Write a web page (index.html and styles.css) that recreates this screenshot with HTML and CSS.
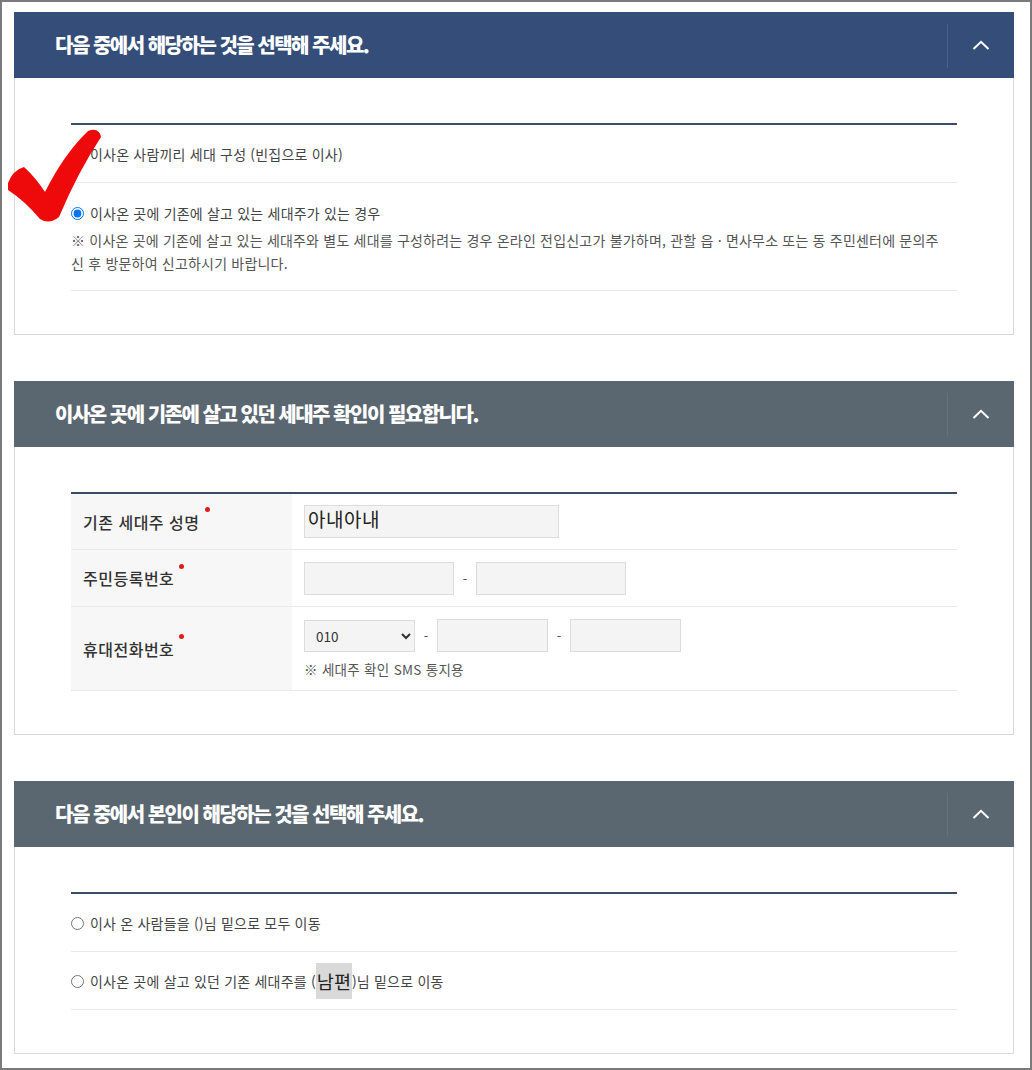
FILE: index.html
```html
<!DOCTYPE html>
<html lang="ko">
<head>
<meta charset="utf-8">
<title>전입신고</title>
<link rel="stylesheet" href="styles.css">
</head>
<body>
<div class="frame">
  <section class="panel">
    <div class="panel-head navy">
      <h2 class="panel-title">다음 중에서 해당하는 것을 선택해 주세요.</h2>
      <button class="toggle" type="button" aria-label="접기">
        <svg width="18" height="10" viewBox="0 0 18 10"><polyline points="1.5,9 9,1.8 16.5,9" fill="none" stroke="#fff" stroke-width="2"/></svg>
      </button>
    </div>
    <div class="panel-body">
      <ul class="opts">
        <li class="opt"><label class="opt-label"><input type="radio" name="q1" class="radio">이사온 사람끼리 세대 구성 (빈집으로 이사)</label></li>
        <li class="opt opt-tall">
          <label class="opt-label"><input type="radio" name="q1" class="radio" checked>이사온 곳에 기존에 살고 있는 세대주가 있는 경우</label>
          <p class="note">※ 이사온 곳에 기존에 살고 있는 세대주와 별도 세대를 구성하려는 경우 온라인 전입신고가 불가하며, 관할 읍 · 면사무소 또는 동 주민센터에 문의주<br>신 후 방문하여 신고하시기 바랍니다.</p>
        </li>
      </ul>
    </div>
  </section>

  <section class="panel">
    <div class="panel-head slate">
      <h2 class="panel-title">이사온 곳에 기존에 살고 있던 세대주 확인이 필요합니다.</h2>
      <button class="toggle" type="button" aria-label="접기">
        <svg width="18" height="10" viewBox="0 0 18 10"><polyline points="1.5,9 9,1.8 16.5,9" fill="none" stroke="#fff" stroke-width="2"/></svg>
      </button>
    </div>
    <div class="panel-body">
      <div class="form">
        <div class="frow r1">
          <div class="flabel">기존 세대주 성명<span class="req"></span></div>
          <div class="fcell"><input class="field w255 big" type="text" value="아내아내"></div>
        </div>
        <div class="frow r2">
          <div class="flabel">주민등록번호<span class="req"></span></div>
          <div class="fcell"><input class="field w150" type="text"><span class="dash">-</span><input class="field w150" type="password"></div>
        </div>
        <div class="frow r3">
          <div class="flabel">휴대전화번호<span class="req"></span></div>
          <div class="fcell col">
            <div class="line">
              <select class="field sel"><option>010</option><option>011</option><option>016</option></select><span class="dash">-</span><input class="field w111" type="text"><span class="dash">-</span><input class="field w111" type="text">
            </div>
            <p class="hint">※ 세대주 확인 SMS 통지용</p>
          </div>
        </div>
      </div>
    </div>
  </section>

  <section class="panel">
    <div class="panel-head slate">
      <h2 class="panel-title">다음 중에서 본인이 해당하는 것을 선택해 주세요.</h2>
      <button class="toggle" type="button" aria-label="접기">
        <svg width="18" height="10" viewBox="0 0 18 10"><polyline points="1.5,9 9,1.8 16.5,9" fill="none" stroke="#fff" stroke-width="2"/></svg>
      </button>
    </div>
    <div class="panel-body">
      <ul class="opts">
        <li class="opt"><label class="opt-label"><input type="radio" name="q3" class="radio">이사 온 사람들을 ()님 밑으로 모두 이동</label></li>
        <li class="opt"><label class="opt-label"><input type="radio" name="q3" class="radio">이사온 곳에 살고 있던 기존 세대주를 (<span class="mark">남편</span>)님 밑으로 이동</label></li>
      </ul>
    </div>
  </section>

  <svg class="check" width="100" height="104" viewBox="0 0 100 104" aria-hidden="true">
    <path d="M 6 63 Q 11 50 22 47 Q 34 58 43 72 Q 62 34 86 11 Q 97 7 99 17 Q 76 52 57 97 Q 47 105 38 99 Q 23 81 6 70 Z" fill="#ee0a0a"/>
  </svg>
</div>
</body>
</html>
```

FILE: styles.css
```css
* { box-sizing: border-box; }

body {
  margin: 0;
  background: #fff;
  color: #444;
  font-family: "Noto Sans CJK KR", "Noto Sans", sans-serif;
}

.frame {
  position: relative;
  width: 1032px;
  height: 1070px;
  border: 2px solid #7b7b7b;
  padding: 10px 16px 0 12px;
  display: flex;
  flex-direction: column;
  gap: 46px;
  overflow: hidden;
}

.panel { width: 1000px; }

.panel-head {
  height: 66px;
  display: flex;
  align-items: center;
}
.navy { background: #344d79; }
.slate { background: #5a6670; }

.panel-title {
  flex: 1;
  margin: 0;
  padding-left: 41px;
  color: #fff;
  font-size: 20px;
  font-weight: 900;
  letter-spacing: -1.5px;
  line-height: 24px;
}

.toggle {
  width: 67px;
  align-self: stretch;
  margin: 12px 0 10px;
  padding: 0;
  border: 0;
  border-left: 1px solid #4a6088;
  background: transparent;
  display: flex;
  align-items: center;
  justify-content: center;
}
.slate .toggle { border-left-color: #66717b; }
.toggle svg { display: block; margin-top: -2px; }

.panel-body {
  border: 1px solid #d9d9d9;
  border-top: 0;
  padding: 45px 56px 43px;
}

.opts {
  list-style: none;
  margin: 0;
  padding: 0;
  border-top: 2px solid #3b4c68;
}

.opt {
  height: 58px;
  border-bottom: 1px solid #e9e9e9;
  display: flex;
  align-items: center;
  padding-top: 1px;
}
.opt-tall {
  height: 108px;
  display: block;
  padding: 20px 0 0;
}

.opt-label {
  display: flex;
  align-items: center;
  font-size: 14px;
  letter-spacing: 0.2px;
  line-height: 20px;
  color: #444;
}

.radio {
  width: 13px;
  height: 13px;
  margin: 0 6px 0 0;
  flex: none;
}

.note {
  margin: 6px 0 0;
  font-size: 14px;
  letter-spacing: 0.2px;
  line-height: 23px;
  color: #555;
}

.mark {
  display: inline-block;
  background: #d9d9d9;
  color: #222;
  font-size: 18.5px;
  line-height: 36px;
  height: 36px;
  padding: 0 1px;
  letter-spacing: 0;
}

/* form table */
.form { border-top: 2px solid #3b4c68; }

.frow {
  display: grid;
  grid-template-columns: 221px 1fr;
  border-bottom: 1px solid #e9e9e9;
}
.r1 { height: 56px; }
.r2 { height: 57px; }
.r3 { height: 84px; }

.flabel {
  background: #f7f7f7;
  padding-left: 12px;
  display: flex;
  align-items: center;
  font-size: 16px;
  font-weight: 500;
  letter-spacing: 0.5px;
  color: #333;
  line-height: 20px;
}

.req {
  display: inline-block;
  width: 5px;
  height: 5px;
  border-radius: 50%;
  background: #e01b1b;
  margin-left: 5px;
  align-self: center;
  transform: translateY(-12px);
}

.fcell {
  padding-left: 12px;
  display: flex;
  align-items: center;
}
.fcell.col {
  flex-direction: column;
  align-items: flex-start;
  justify-content: flex-start;
  padding-top: 12px;
}
.line { display: flex; align-items: center; }

.field {
  height: 33px;
  border: 1px solid #dcdcdc;
  background: #f4f4f4;
  font-family: "Noto Sans CJK KR", "Noto Sans", sans-serif;
  font-size: 13px;
  color: #333;
  padding: 0 3px;
  margin: 0;
  outline: none;
}
.w255 { width: 255px; }
.w150 { width: 150px; }
.w111 { width: 111px; }
.big {
  font-size: 19px;
  letter-spacing: 0.5px;
  color: #222;
  padding-bottom: 6px;
}
.sel {
  width: 111px;
  height: 32px;
  padding-left: 7px;
  font-size: 13.5px;
}

.dash {
  width: 22px;
  text-align: center;
  font-size: 13px;
  color: #555;
}

.hint {
  margin: 8px 0 0;
  font-size: 13.5px;
  letter-spacing: 0.3px;
  line-height: 18px;
  color: #555;
}

.check {
  position: absolute;
  left: 0;
  top: 118px;
}
```
